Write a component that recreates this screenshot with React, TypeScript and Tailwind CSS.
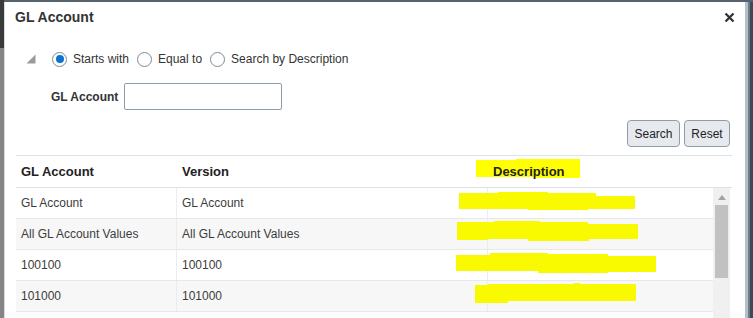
import { useState } from 'react';

const ROWS = [
  { account: 'GL Account', version: 'GL Account' },
  { account: 'All GL Account Values', version: 'All GL Account Values' },
  { account: '100100', version: '100100' },
  { account: '101000', version: '101000' },
];

// Redaction scribbles in the Description column (coords relative to the cell)
const SCRIBBLES = [
  'M-29 5 L10 5 L10 4 L60 4 L60 5 L108 5 L108 8 L147 8 L147 21 L100 21 L100 22 L40 22 L40 21 L-29 21 Z',
  'M-31 3 L6 3 L6 2 L52 2 L52 3 L100 3 L100 5 L150 5 L150 20 L101 20 L101 22 L40 22 L40 20 L0 20 L0 21 L-31 21 Z',
  'M-32 5 L2 5 L2 3 L60 3 L60 4 L120 4 L120 6 L168 6 L168 22 L120 22 L120 23 L50 23 L50 21 L-32 21 Z',
  'M-13 4 L0 4 L0 3 L86 3 L86 2 L92 2 L92 3 L148 3 L148 20 L20 20 L20 22 L-13 22 Z',
];

function Radio({ checked, label, onSelect }: { checked: boolean; label: string; onSelect: () => void }) {
  return (
    <label className="flex items-center cursor-pointer" onClick={onSelect}>
      <span className="w-[15px] h-[15px] rounded-full border border-[#7b8a97] bg-white flex items-center justify-center">
        {checked && <span className="w-[8px] h-[8px] rounded-full bg-[#0a72d1]" />}
      </span>
      <span className="ml-[6px] text-[12px] text-[#333]">{label}</span>
    </label>
  );
}

export default function App() {
  const [mode, setMode] = useState('starts');

  return (
    <div
      className="w-[753px] h-[318px] overflow-hidden flex bg-[#56636e]"
      style={{ fontFamily: '"Liberation Sans", Arial, sans-serif' }}
    >
      {/* page behind the dialog */}
      <div className="w-[4px] flex flex-col">
        <div className="h-[48px] bg-[#3a3a3a]" />
        <div className="flex-1 bg-[#858585]" />
      </div>

      <div className="w-[744px] mt-[2px] bg-white border-l border-l-[#d5dbe0] border-r-[3px] border-r-[#b3bfc9] flex flex-col">
        {/* Title */}
        <div className="h-[30px] flex items-center justify-between pl-[10px] pr-[10px]">
          <span className="text-[14px] font-bold text-[#333]">GL Account</span>
          <svg width="11" height="11" viewBox="0 0 11 11">
            <path d="M1.5 1.5 L9.5 9.5 M9.5 1.5 L1.5 9.5" stroke="#333" strokeWidth="2.3" />
          </svg>
        </div>

        {/* Search options */}
        <div className="mt-[18px] h-[18px] flex items-center pl-[21px]">
          <svg width="10" height="10" viewBox="0 0 10 10">
            <path d="M9.5 0.5 L9.5 9.5 L0.5 9.5 Z" fill="#9a9a9a" />
          </svg>
          <div className="ml-[16px] flex items-center gap-[8px]">
            <Radio checked={mode === 'starts'} label="Starts with" onSelect={() => setMode('starts')} />
            <Radio checked={mode === 'equal'} label="Equal to" onSelect={() => setMode('equal')} />
            <Radio checked={mode === 'desc'} label="Search by Description" onSelect={() => setMode('desc')} />
          </div>
        </div>

        <div className="mt-[15px] flex items-center pl-[46px]">
          <span className="text-[12px] font-bold text-[#333]">GL Account</span>
          <input className="ml-[6px] w-[158px] h-[27px] border border-[#8d9ca8] rounded-[2px] bg-white outline-none px-1 text-[12px]" />
        </div>

        <div className="mt-[10px] flex justify-end gap-[4px] pr-[15px]">
          <button className="w-[53px] h-[27px] rounded-[4px] border border-[#8f9ca8] bg-[#e6eaee] text-[12px] text-[#222]">
            Search
          </button>
          <button className="w-[46px] h-[27px] rounded-[4px] border border-[#8f9ca8] bg-[#e6eaee] text-[12px] text-[#222]">
            Reset
          </button>
        </div>

        {/* Results table */}
        <div className="mt-[8px] ml-[11px] mr-[13px] flex flex-col">
          <div className="h-[33px] border-t border-b border-[#dbe2e8] flex items-center text-[13px] font-bold text-[#222]">
            <div className="w-[160px] pl-[5px]">GL Account</div>
            <div className="w-[311px] pl-[6px]">Version</div>
            <div className="flex-1 pl-[6px] relative">
              <svg className="absolute left-[-11px] top-[-3px]" width="106" height="20" viewBox="0 0 106 20">
                <path d="M0 1 L40 1 L40 0 L104 0 L104 19 L60 19 L60 18 L0 18 Z" fill="#ffff00" />
              </svg>
              <span className="relative">Description</span>
            </div>
          </div>

          <div className="flex">
            <div className="w-[697px] flex flex-col">
              {ROWS.map((row, i) => (
                <div
                  key={row.account}
                  className={`h-[31px] border-b border-[#e8e8e8] flex text-[12px] text-[#3c3c3c] ${
                    i % 2 === 1 ? 'bg-[#f7f7f7]' : 'bg-white'
                  }`}
                >
                  <div className="w-[160px] pl-[5px] flex items-center">{row.account}</div>
                  <div className="w-[311px] pl-[5px] flex items-center border-l border-[#ececec]">{row.version}</div>
                  <div className="flex-1 relative border-l border-[#ececec]">
                    <svg className="absolute left-0 top-0 overflow-visible" width="1" height="30">
                      <path d={SCRIBBLES[i]} fill="#f9f900" />
                    </svg>
                  </div>
                </div>
              ))}
            </div>
            {/* scrollbar */}
            <div className="w-[17px] h-[130px] bg-[#f0f0f0] flex flex-col items-center">
              <svg className="mt-[7px]" width="8" height="5" viewBox="0 0 8 5">
                <path d="M0 5 L4 0 L8 5 Z" fill="#a3a3a3" />
              </svg>
              <div className="mt-[5px] w-[13px] h-[73px] bg-[#c1c1c1]" />
            </div>
          </div>
        </div>
      </div>

      <div className="flex-1 mt-[2px] flex">
        <div className="w-[2px] bg-[#6d7c89]" />
        <div className="flex-1 bg-[#3e4a54]" />
      </div>
    </div>
  );
}
